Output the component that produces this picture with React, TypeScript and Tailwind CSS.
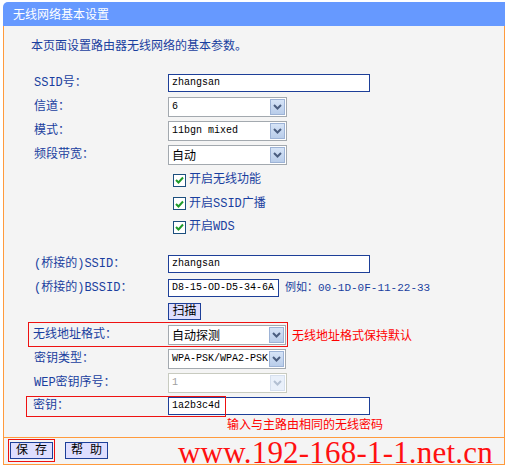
import React from 'react';

interface RowProps {
  label?: React.ReactNode;
  children?: React.ReactNode;
  className?: string;
}

interface SelectProps {
  value: string;
  className?: string;
  disabled?: boolean;
  cjk?: boolean;
}

// Label column ends where every control starts (x = 168)
function Row({ label, children, className = 'h-[24px]' }: RowProps) {
  return (
    <div className={`relative flex items-center ${className}`}>
      <div className="w-[164px] shrink-0 pl-[30px] text-[12px] leading-none text-[#1a3f9f]">{label}</div>
      <div className="flex items-center">{children}</div>
    </div>
  );
}

function TextInput({ value, className = 'w-[202px]' }: { value: string; className?: string }) {
  return (
    <div className={`flex h-[18px] items-center border border-[#1d3f98] bg-white pl-[3px] ${className}`}>
      <span className="font-['Liberation_Mono',monospace] text-[10px] leading-none text-black">{value}</span>
    </div>
  );
}

function Select({ value, className = 'w-[119px]', disabled = false, cjk = false }: SelectProps) {
  return (
    <div
      className={`flex h-[20px] items-stretch border bg-white ${className} ${
        disabled ? 'border-[#c8cbc0]' : 'border-[#a3a9af]'
      }`}
    >
      <span
        className={`flex flex-1 items-center overflow-hidden whitespace-nowrap pl-[3px] leading-none ${
          cjk
            ? "font-['Noto_Sans_CJK_SC',sans-serif] text-[12px]"
            : "font-['Liberation_Mono',monospace] text-[10px]"
        } ${disabled ? 'text-[#a0a0a0]' : 'text-black'}`}
      >
        {value}
      </span>
      <span
        className={`m-[1px] flex w-[15px] items-center justify-center border ${
          disabled
            ? 'border-[#d6e0ee] bg-[#e9f0fa]'
            : 'border-[#9db3d6] bg-gradient-to-b from-[#d6e4f7] to-[#b9cdea]'
        }`}
      >
        <svg width="9" height="6" viewBox="0 0 9 6">
          <path d="M1 1 L4.5 4.5 L8 1" stroke={disabled ? '#b3c0d2' : '#4b5e80'} strokeWidth="2" fill="none" />
        </svg>
      </span>
    </div>
  );
}

function Checkbox({ label }: { label: string }) {
  return (
    <div className="ml-[5px] flex items-center">
      <span className="flex h-[13px] w-[13px] items-center justify-center border border-[#1c4f7e] bg-white">
        <svg width="9" height="8" viewBox="0 0 9 8">
          <path d="M1 4 L3.5 6.5 L8 1.5" stroke="#1f9a2a" strokeWidth="2" fill="none" />
        </svg>
      </span>
      <span className="ml-[3px] text-[12px] leading-none text-[#1a3f9f]">{label}</span>
    </div>
  );
}

function Button({ text, className = '' }: { text: string; className?: string }) {
  return (
    <span
      className={`flex h-[17px] items-center justify-center border border-[#1d3f98] bg-[#dedeff] text-[12px] leading-none text-black ${className}`}
    >
      {text}
    </span>
  );
}

export default function App() {
  return (
    <div className="min-h-[472px] bg-white pt-[2px] font-['Liberation_Mono','Noto_Sans_CJK_SC',monospace]">
      <div className="ml-[3px] w-[502px]">
        {/* Header */}
        <div className="flex h-[24px] items-center rounded-tl-[5px] bg-[#6699ff] pl-[10px] font-['Noto_Sans_CJK_SC',sans-serif] text-[12px] text-white">
          无线网络基本设置
        </div>

        {/* Body */}
        <div className="border-x border-b border-[#ff9a3c] bg-[#f4f4f4] pb-[6px] pt-[7px]">
          <div className="flex h-[24px] items-center pl-[27px] font-['Noto_Sans_CJK_SC',sans-serif] text-[12px] text-[#1a3f9f]">
            本页面设置路由器无线网络的基本参数。
          </div>

          <div className="mt-[14px]">
            <Row label="SSID号：">
              <TextInput value="zhangsan" />
            </Row>
            <Row label="信道：">
              <Select value="6" />
            </Row>
            <Row label="模式：">
              <Select value="11bgn mixed" />
            </Row>
            <Row label="频段带宽：">
              <Select value="自动" cjk />
            </Row>
            <Row className="mt-[1px] h-[24px]">
              <Checkbox label="开启无线功能" />
            </Row>
            <Row className="h-[23px]">
              <Checkbox label="开启SSID广播" />
            </Row>
            <Row className="h-[24px]">
              <Checkbox label="开启WDS" />
            </Row>
          </div>

          <div className="mt-[13px]">
            <Row label="(桥接的)SSID：">
              <TextInput value="zhangsan" />
            </Row>
            <Row label="(桥接的)BSSID：">
              <TextInput value="D8-15-OD-D5-34-6A" className="w-[111px]" />
              <span className="ml-[6px] text-[11px] leading-none text-[#1a3f9f]">例如：00-1D-0F-11-22-33</span>
            </Row>
            <Row className="h-[23px]">
              <Button text="扫描" className="w-[33px]" />
            </Row>
            <Row label={<span className="-ml-[1px]">无线地址格式：</span>}>
              <Select value="自动探测" cjk className="w-[118px]" />
              <span className="ml-[6px] font-['Noto_Sans_CJK_SC',sans-serif] text-[12px] leading-none text-[#ff0000]">
                无线地址格式保持默认
              </span>
              <span className="pointer-events-none absolute left-[24px] top-[-1px] h-[25px] w-[260px] border border-[#ee1111]" />
            </Row>
            <Row label="密钥类型：">
              <Select value="WPA-PSK/WPA2-PSK" className="w-[118px]" />
            </Row>
            <Row label="WEP密钥序号：">
              <Select value="1" disabled className="w-[119px]" />
            </Row>
            <Row label={<span className="-ml-[1px]">密钥：</span>} className="h-[22px]">
              <TextInput value="1a2b3c4d" />
              <span className="pointer-events-none absolute left-[22px] top-[1px] h-[21px] w-[200px] border border-[#ee1111]" />
            </Row>
            <div className="flex h-[14px] items-center pl-[223px] font-['Noto_Sans_CJK_SC',sans-serif] text-[12px] leading-none text-[#ff0000]">
              输入与主路由相同的无线密码
            </div>
          </div>
        </div>

        {/* Footer */}
        <div className="relative flex h-[27px] items-start gap-[10px] border-x border-b border-[#ff9a3c] bg-[#f4f4f4] pl-[4px] pt-[1px]">
          <div className="border border-[#ee1111] px-[1px] py-[2px]">
            <Button text="保 存" className="h-[16px] w-[43px]" />
          </div>
          <div className="pt-[3px]">
            <Button text="帮 助" className="h-[16px] w-[43px]" />
          </div>
          {/* watermark */}
          <span className="pointer-events-none absolute left-[174px] top-[-1px] h-[27px] whitespace-nowrap text-[31px] leading-none tracking-[0.2px] text-[#ff1010] [font-family:'Liberation_Serif',serif]">
            www.192-168-1-1.net.cn
          </span>
        </div>
      </div>
    </div>
  );
}
